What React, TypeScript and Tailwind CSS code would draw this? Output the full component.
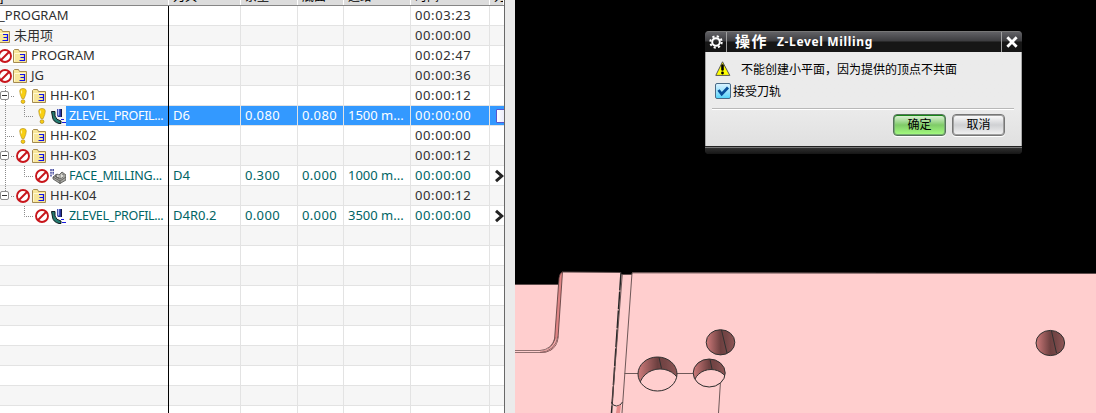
import type { ReactNode } from "react";
import { clsx } from "clsx";

type Status = "warn" | "blocked" | null;
type Kind = "group" | "profile" | "face" | null;

interface Row {
  level: number;
  label: string;
  status: Status;
  kind: Kind;
  open?: boolean;
  tool?: string;
  stock?: string;
  floor?: string;
  feed?: string;
  time?: string;
  selected?: boolean;
  more?: boolean;
}

const rows: Row[] = [
  { level: 0, label: "_PROGRAM", status: null, kind: null, time: "00:03:23" },
  { level: 0, label: "未用项", status: null, kind: "group", time: "00:00:00" },
  { level: 1, label: "PROGRAM", status: "blocked", kind: "group", time: "00:02:47" },
  { level: 1, label: "JG", status: "blocked", kind: "group", time: "00:00:36" },
  { level: 2, label: "HH-K01", status: "warn", kind: "group", open: true, time: "00:00:12" },
  { level: 3, label: "ZLEVEL_PROFIL...", status: "warn", kind: "profile", tool: "D6", stock: "0.080", floor: "0.080", feed: "1500 m...", time: "00:00:00", selected: true },
  { level: 2, label: "HH-K02", status: "warn", kind: "group", time: "00:00:00" },
  { level: 2, label: "HH-K03", status: "blocked", kind: "group", open: true, time: "00:00:12" },
  { level: 3, label: "FACE_MILLING...", status: "blocked", kind: "face", tool: "D4", stock: "0.300", floor: "0.000", feed: "1000 m...", time: "00:00:00", more: true },
  { level: 2, label: "HH-K04", status: "blocked", kind: "group", open: true, time: "00:00:12" },
  { level: 3, label: "ZLEVEL_PROFIL...", status: "blocked", kind: "profile", tool: "D4R0.2", stock: "0.000", floor: "0.000", feed: "3500 m...", time: "00:00:00", more: true },
];

const emptyRows = Array.from({ length: 10 });

const columns = "grid grid-cols-[169px_72px_57px_46px_67px_79px_14px]";
const uiFont = "font-['Noto_Sans','Noto_Sans_CJK_SC',sans-serif]";
const cjkFont = "font-['Liberation_Sans','Noto_Sans_CJK_SC',sans-serif]";

function FolderIcon() {
  return (
    <svg className="h-[14px] w-[15px] shrink-0" viewBox="0 0 15 14">
      <path d="M.5 13.5V1.5l1-1h4l1 2h7v11z" fill="#f8e79b" stroke="#a58a50" />
      <path d="M1.5 12.5V4.5h11" fill="none" stroke="#fff9cf" />
      <path d="M7 5.5h4.5v6H6.5M7.5 8.5h4" fill="none" stroke="#1010e8" strokeWidth="1.2" />
    </svg>
  );
}

function BlockedIcon() {
  return (
    <svg className="size-[14px] shrink-0" viewBox="0 0 14 14">
      <circle cx="7" cy="7" r="6" fill="#fff" stroke="#c8151b" strokeWidth="1.9" />
      <path d="M3 11L11 3" stroke="#c8151b" strokeWidth="2" />
    </svg>
  );
}

function WarnIcon() {
  return (
    <svg className="h-4 w-[14px] shrink-0" viewBox="0 0 14 16">
      <path d="M3.7 3Q3.7 .4 7 .4t3.3 2.6Q10.3 6 8.2 10.5H5.8Q3.7 6 3.7 3z" fill="#f9cf12" stroke="#b08a18" strokeWidth=".6" />
      <path d="M5.5 2.5v3" stroke="#fff3a0" strokeWidth="1.2" />
      <circle cx="7" cy="13.6" r="1.9" fill="#f9cf12" stroke="#a27c10" strokeWidth=".6" />
    </svg>
  );
}

function ProfileIcon() {
  return (
    <svg className="h-[15px] w-4 shrink-0" viewBox="0 0 16 15">
      <path d="M.5 2.5H4V7q1 4 6 5v2.5H8Q2 13 1.5 8z" fill="#237b70" stroke="#101c20" />
      <path d="M6 0h5v8H7q-1-1-1-2z" fill="#28349f" />
      <path d="M7.5 0v6.5" stroke="#aebcf5" strokeWidth="1.5" />
      <path d="M10.5 0v8" stroke="#15163e" />
      <path d="M10 10.5h3M11 13.5h4" stroke="#1717de" strokeWidth="1.2" />
    </svg>
  );
}

function FaceIcon() {
  return (
    <svg className="h-[15px] w-4 shrink-0" viewBox="0 0 16 15">
      <path d="M1 0v8M3.2 0v6" stroke="#5055a5" strokeWidth="1.6" strokeDasharray="2 .7" />
      <path d="M3 8l4-3 2 1 3-3 4 3v5l-6 3.5-7-4.5z" fill="#a7a7a2" stroke="#4d4d4a" strokeWidth=".8" />
      <path d="M3 8l7 4 6-4M6 5v3l4 2 3-2V5M10 12v3M5 7l4 2" fill="none" stroke="#4d4d4a" strokeWidth=".7" />
      <path d="M7 6l3 1-3 1zM11 5l3 2-3 2z" fill="#dfdfd9" />
    </svg>
  );
}

// dotted connector lines and the expand box left of a row's icons
function Guides({ row, last }: { row: Row; last: boolean }) {
  const dotted = { stroke: "#8a8a8a", strokeDasharray: "1 1" };
  if (row.level === 3) {
    return (
      <svg className="h-5 w-[35px] shrink-0" viewBox="0 0 35 20">
        {!last && <path d="M5.5 0v20" {...dotted} />}
        <path d="M24.5 0v10.5h9" fill="none" {...dotted} />
      </svg>
    );
  }
  return (
    <svg className="h-5 w-4 shrink-0" viewBox="0 0 16 20">
      <path d={row.label === "HH-K04" ? "M5.5 0v10" : "M5.5 0v20"} {...dotted} />
      <path d="M7 10.5h8" {...dotted} />
      {row.open && (
        <g>
          <path d="M9 10.5h2" stroke="#fff" />
          <rect x=".5" y="5.5" width="8" height="8" rx="1.5" fill="#fff" stroke="#8d8d8d" />
          <path d="M2 9.5h5" stroke="#333" />
        </g>
      )}
    </svg>
  );
}

function NameCell({ row, last }: { row: Row; last: boolean }) {
  return (
    <div className="flex h-5 items-center overflow-hidden border-r border-r-black">
      {row.level > 1 && <Guides row={row} last={last} />}
      {row.status && (
        <span className={clsx("flex shrink-0", row.level === 1 && "-ml-[2px]")}>
          {row.status === "warn" ? <WarnIcon /> : <BlockedIcon />}
        </span>
      )}
      {row.kind === "group" && (
        <span className={clsx("flex shrink-0", row.level === 0 && "-ml-1", row.level === 1 && "ml-px", row.level === 2 && "ml-[2px]")}>
          <FolderIcon />
        </span>
      )}
      {row.kind === "profile" && <span className="ml-[2px]"><ProfileIcon /></span>}
      {row.kind === "face" && <span className="ml-px mr-px"><FaceIcon /></span>}
      <span
        className={clsx(
          "h-5 flex-1 whitespace-nowrap leading-[19px]",
          row.kind === null && "-ml-px",
          row.kind === "group" && "pl-[3px]",
          row.level === 3 && "-ml-px pl-[3px] text-[12.5px]",
          row.kind === "profile" && "tracking-[-0.33px]",
          row.kind === "face" && "tracking-[-0.2px]",
          row.level === 3 && (row.selected ? "bg-[#3399ff] text-white" : "text-[#006464]"),
        )}
      >
        {row.label}
      </span>
    </div>
  );
}

function Cell({ row, children }: { row: Row; children?: ReactNode }) {
  return (
    <div
      className={clsx(
        "h-5 overflow-hidden whitespace-nowrap border-r border-b border-[#e3e3e3] pl-1 leading-[19px]",
        row.selected && "bg-[#3399ff] text-white",
        row.level === 3 && !row.selected && "text-[#006464]",
      )}
    >
      {children}
    </div>
  );
}

function OperationTable() {
  return (
    <div className={clsx("h-[413px] w-[505px] shrink-0 overflow-hidden border-r border-[#686868] bg-white text-[13px] text-[#303030]", uiFont)}>
      <div className={clsx(columns, "h-[6px] overflow-hidden border-b border-[#858585] bg-[#dcdcdc] text-[12px] text-black", cjkFont)}>
        {["]", "刀具", "余量", "底面", "进给", "时间", "刀"].map((title, i) => (
          <div key={i} className={clsx("h-[5px] overflow-hidden whitespace-nowrap border-r border-r-white", i > 0 && "pl-1")}>
            <span className="-mt-3 block leading-[18px]">{title}</span>
          </div>
        ))}
      </div>
      {rows.map((row, i) => (
        <div key={i} className={clsx(columns, "h-5", i % 2 ? "bg-[#f6f6f6]" : "bg-white")}>
          <div className="h-5 border-b border-[#e3e3e3]">
            <NameCell row={row} last={i === rows.length - 1} />
          </div>
          <Cell row={row}>{row.tool}</Cell>
          <Cell row={row}>{row.stock && <span className="tracking-[0.35px]">{row.stock}</span>}</Cell>
          <Cell row={row}>{row.floor && <span className="tracking-[0.35px]">{row.floor}</span>}</Cell>
          <Cell row={row}>{row.feed}</Cell>
          <Cell row={row}><span className="tracking-[0.6px]">{row.time}</span></Cell>
          <div className={clsx("h-5 overflow-hidden border-b border-[#e3e3e3]", row.selected && "bg-[#3399ff]")}>
            {row.selected && <div className="ml-[6px] mt-[3px] h-[14px] w-4 rounded-[1px] border border-[#5756cf] bg-linear-to-r from-white to-[#d8daf5]" />}
            {row.more && (
              <svg className="ml-[5px] mt-[3px] h-[14px] w-[9px]" viewBox="0 0 9 14">
                <path d="M1 1.8L6.8 7 1 12.2" fill="none" stroke="#222" strokeWidth="3" />
              </svg>
            )}
          </div>
        </div>
      ))}
      {emptyRows.map((_, i) => (
        <div key={i} className={clsx(columns, "h-5", i % 2 ? "bg-white" : "bg-[#f6f6f6]")}>
          <div className="border-r border-black">
            <div className="h-5 border-b border-[#e3e3e3]" />
          </div>
          {[0, 1, 2, 3, 4].map((n) => <div key={n} className="border-r border-b border-[#e3e3e3]" />)}
          <div className="border-b border-[#e3e3e3]" />
        </div>
      ))}
    </div>
  );
}

function PartModel() {
  return (
    <svg className="block h-[413px] w-[581px]" viewBox="515 0 581 413">
      <defs>
        <linearGradient id="bore">
          <stop offset="0" stopColor="#cf7b7b" />
          <stop offset=".5" stopColor="#6d4040" />
          <stop offset=".7" stopColor="#754646" />
          <stop offset="1" stopColor="#905757" />
        </linearGradient>
        <clipPath id="bore-left"><ellipse cx="657.5" cy="374" rx="19.5" ry="17" /></clipPath>
        <clipPath id="bore-right"><ellipse cx="709.2" cy="373" rx="16" ry="14" /></clipPath>
      </defs>
      <path d="M515 284.5h43.5l2-9.5 2-3H621v2h11l.5-1.5L1096 273.5V413H515z" fill="#ffcece" />
      <path d="M515 284.5h43.5M562 272l59 .5M621.5 274.5H632M632 272.8L1096 273.5" fill="none" stroke="#5d4b4b" />
      <path d="M562.5 272l-4.5 66q-1 8-7 12-5 3-11 2.5l3-1.5q8-1 11.5-11l4.5-62q.5-5 3.5-6z" fill="#df8484" stroke="#503636" strokeWidth=".8" />
      <path d="M540 352.5q12 0 16.5-9l1.5-6-2.5 2q-4 11-15.5 11.5z" fill="#f4aaaa" />
      <path d="M515 350.5h25q12-1 15-13M515 352.5h25q15-1 18-16" fill="none" stroke="#765858" strokeWidth=".8" />
      <path d="M621 272.5L611.5 413" stroke="#252525" strokeWidth="1.5" strokeDasharray="18 1" />
      <path d="M622.3 274L612 405M632 273L622 413" fill="none" stroke="#5c4a4a" strokeWidth=".9" />
      <path d="M611.5 402q1 4 5 4t6-4" fill="none" stroke="#333" />
      <path d="M617 406l-1 7h4l1-8z" fill="#e68c8c" />
      <path d="M624.5 373.5H638M677 373.5h16M720.5 381l-2 32" stroke="#6f5959" />
      <ellipse cx="657.5" cy="374" rx="19.5" ry="17" fill="url(#bore)" />
      <ellipse cx="660" cy="388.5" rx="21" ry="19.5" fill="#ffcece" stroke="#303030" clipPath="url(#bore-left)" />
      <ellipse cx="657.5" cy="374" rx="19.5" ry="17" fill="none" stroke="#303030" />
      <ellipse cx="709.2" cy="373" rx="16" ry="14" fill="url(#bore)" />
      <ellipse cx="711" cy="385.5" rx="17.5" ry="16" fill="#ffcece" stroke="#303030" clipPath="url(#bore-right)" />
      <ellipse cx="709.2" cy="373" rx="16" ry="14" fill="none" stroke="#303030" />
      <ellipse cx="720.5" cy="342.3" rx="14.3" ry="12.6" fill="url(#bore)" stroke="#303030" />
      <ellipse cx="1050.3" cy="343" rx="14.3" ry="12.6" fill="url(#bore)" stroke="#303030" />
      <path d="M659 357.5l2.5 11M710 359.5l2 9.5M721.5 330l5.5 23M1051.5 331l5 22" stroke="#303030" />
    </svg>
  );
}

function MessageDialog() {
  return (
    <div className={clsx("absolute left-[190px] top-[31px] flex h-[123px] w-[317px] flex-col overflow-hidden rounded-[4px] bg-[#222] text-black", cjkFont)}>
      <div className="flex h-[21px] shrink-0 border-t border-[#777] bg-linear-to-b from-[#626266] from-0% via-[#3d3d40] via-45% to-[#161616] to-50% text-white">
        <div className="flex w-[22px] items-center justify-center border-r border-[#a0a0a0]">
          <svg className="size-[14px]" viewBox="0 0 14 14">
            <circle cx="7" cy="7" r="3.8" fill="none" stroke="#fff" strokeWidth="2" />
            <circle cx="7" cy="7" r="5.7" fill="none" stroke="#fff" strokeWidth="2" strokeDasharray="2.2 2.28" />
            <circle cx="7" cy="7" r="1.8" fill="#292929" />
          </svg>
        </div>
        <div className="flex flex-1 items-center whitespace-nowrap pl-2 font-bold">
          <span className="text-[15px] tracking-[1.5px]">操作</span>
          <span className="ml-[9px] text-[12px] tracking-[0.65px] font-['Noto_Sans',sans-serif]">Z-Level Milling</span>
        </div>
        <div className="flex w-[21px] items-center justify-center border-l border-[#a0a0a0]">
          <svg className="size-[14px]" viewBox="0 0 12 12">
            <path d="M2 2l8 8M10 2l-8 8" stroke="#fff" strokeWidth="2.4" />
          </svg>
        </div>
      </div>
      <div className="flex h-[94px] shrink-0 flex-col border-x border-[#a8a8a8] bg-linear-to-b from-[#ebebeb] from-60% to-[#e0e0e0] px-[6px] text-[12px]">
        <div className="mt-[7px] flex h-[21px] items-center pl-[3px]">
          <svg className="mb-px h-4 w-[16px] shrink-0" viewBox="0 0 16 16">
            <path d="M7.5 .8L14.8 14.4H.8z" fill="#ffff00" stroke="#555" strokeWidth="1" strokeLinejoin="round" />
            <path d="M7.5 4.5v4" stroke="#000" strokeWidth="2.6" strokeLinecap="round" />
            <circle cx="7.5" cy="12" r="1.4" />
          </svg>
          <span className="ml-[10px] mt-px whitespace-nowrap">不能创建小平面，因为提供的顶点不共面</span>
        </div>
        <div className="mt-px flex h-5 items-center pl-[3px]">
          <div className="flex size-4 items-center justify-center rounded-xs border border-[#496a86] bg-linear-to-b from-[#d8f2ff] to-[#52d4fa]">
            <svg className="size-[14px]" viewBox="0 0 14 14">
              <path d="M2.5 6l3.2 4.2L12 3.5" fill="none" stroke="#074f9a" strokeWidth="2.8" />
            </svg>
          </div>
          <span className="ml-[2px] mt-px">接受刀轨</span>
        </div>
        <div className="mr-px mt-[7px] h-[2px] shrink-0 border-t border-b border-t-[#b8b8b8] border-b-white" />
        <div className="mt-1 flex justify-end gap-[6px] pr-[10px]">
          <button className="h-[22px] w-[53px] rounded-[4px] border border-[#55735a] bg-linear-to-b from-[#e3f4de] from-0% via-[#7fcb68] via-50% to-[#a6ff80] leading-none shadow-[inset_0_1px_0_#178617,inset_0_0_0_1px_#79a875,0_1px_0_#fff]">
            确定
          </button>
          <button className="h-[22px] w-[53px] rounded-[4px] border border-[#777] bg-linear-to-b from-white from-0% via-[#cfd0d3] via-50% to-[#f4f4f4] leading-none shadow-[inset_0_0_0_1px_#a0a0a0,0_1px_0_#fff]">
            取消
          </button>
        </div>
      </div>
      <div className="mt-px h-[7px] border-t border-[#777] bg-linear-to-b from-[#303030] to-[#161616]" />
    </div>
  );
}

export default function App() {
  return (
    <div className="flex h-[413px] w-[1096px] overflow-hidden bg-[#ebebeb]">
      <OperationTable />
      <div className="w-[10px] shrink-0 bg-[#ebebeb]" />
      <main className="relative h-[413px] w-[581px] bg-black">
        <PartModel />
        <MessageDialog />
      </main>
    </div>
  );
}
